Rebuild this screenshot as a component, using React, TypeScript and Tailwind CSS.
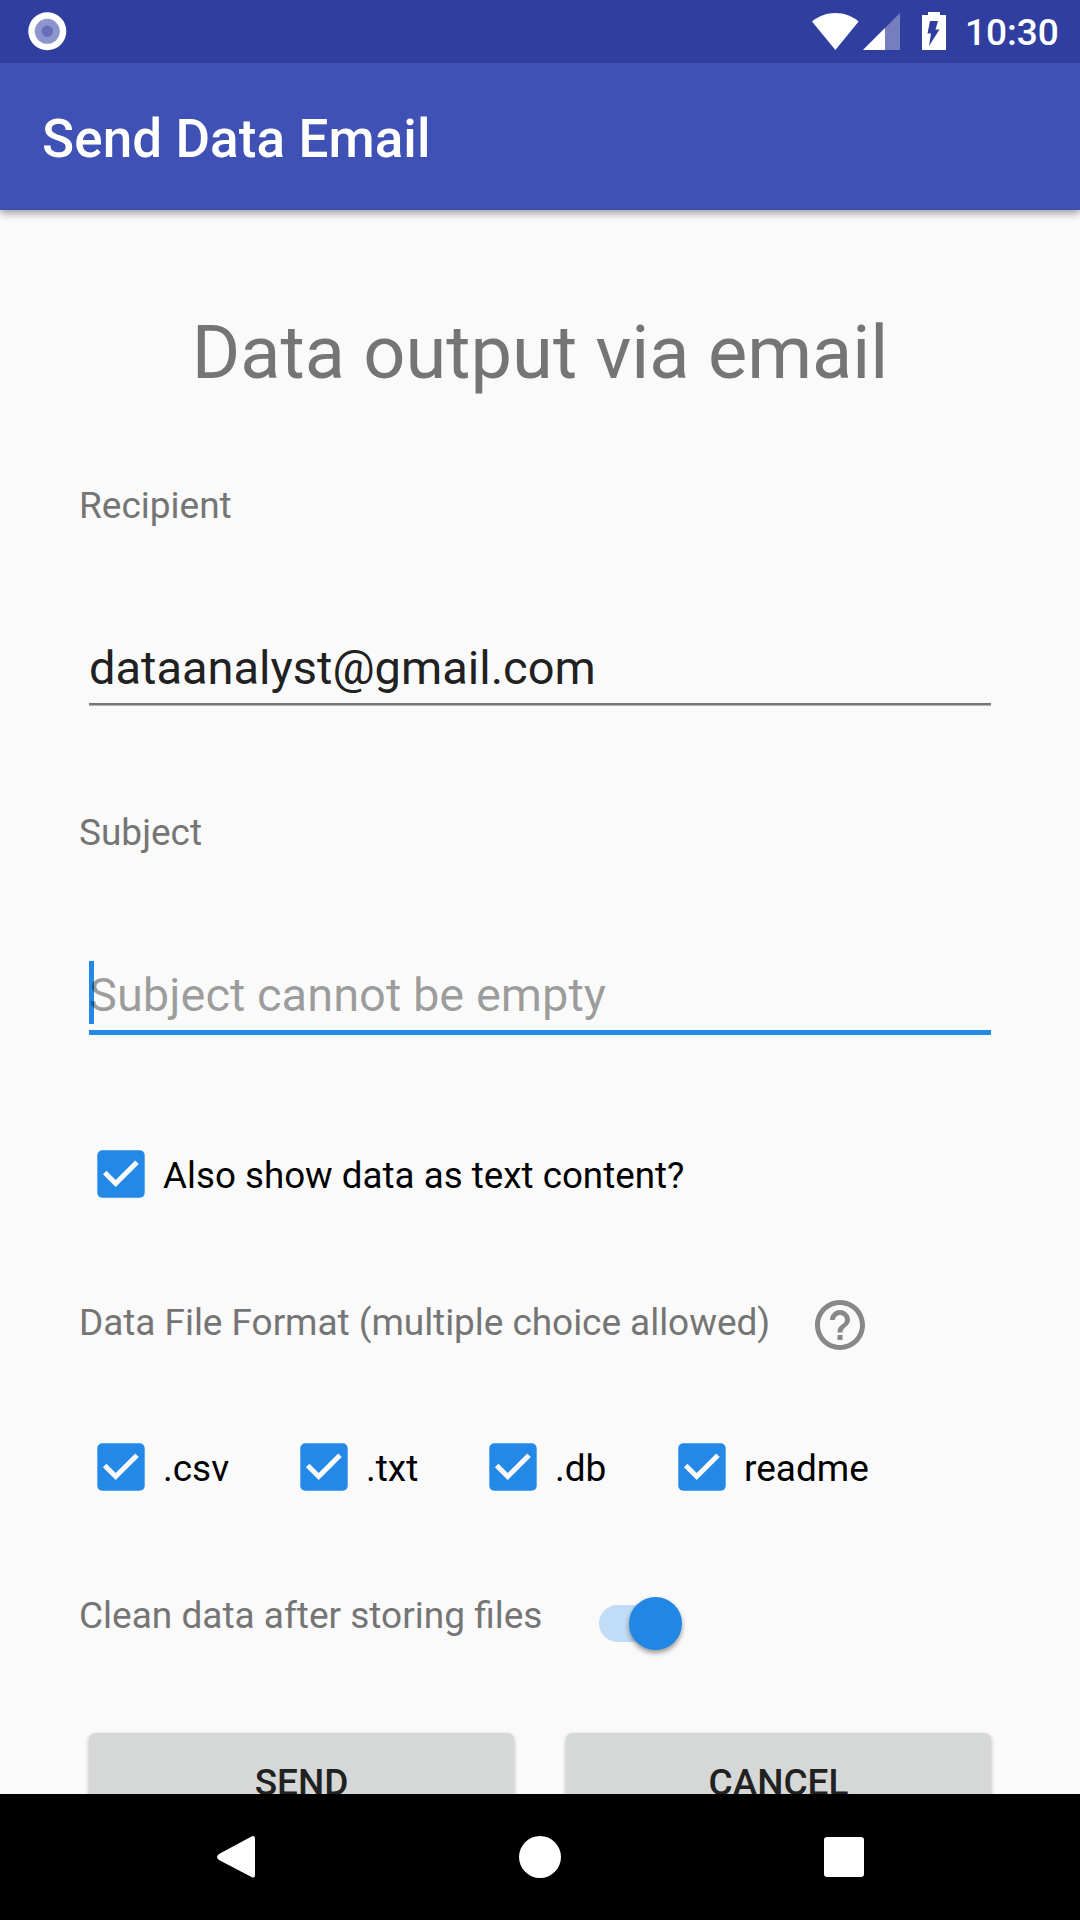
import type { ReactNode } from "react";

function StatusBar() {
  return (
    <div className="relative z-20 flex h-[63px] shrink-0 items-start justify-between bg-[#303f9f] text-white">
      <svg className="mt-[12px] ml-[28px] h-[40px] w-[40px]" viewBox="0 0 40 40">
        <circle cx="19.3" cy="19.3" r="19" fill="#fff" />
        <circle cx="19.3" cy="19.3" r="12.5" fill="#8c95cd" />
        <circle cx="19.3" cy="19.3" r="5.7" fill="#6670b9" />
      </svg>
      <div className="flex items-start pr-[21px]">
        <svg className="mt-[13px] h-[38px] w-[47px]" viewBox="0 0 47 38">
          <path d="M23.4 37 0 8.6C6.5 3 14.5 0 23.4 0s16.900 3 23.200 8.600z" fill="#fff" />
        </svg>
        <svg className="mt-[13px] ml-[4px] h-[38px] w-[38px]" viewBox="0 0 38 38">
          <path d="M0 37 37 0v37z" fill="#767fbe" />
          <path d="M0 37 22 15v22z" fill="#fff" />
        </svg>
        <svg className="mt-[12px] ml-[21px] h-[39px] w-[24px]" viewBox="0 0 24 39">
          <path d="M6 0h12v3h6v35H0V3h6z" fill="#fff" />
          <path d="M8 9h8l-2.500 8.500H17.500L7 34l2-12.500H5.500z" fill="#303f9f" />
        </svg>
        <span className="mt-[11px] ml-[19px] w-[94px] text-[37px] leading-[44px] font-medium">10:30</span>
      </div>
    </div>
  );
}

function CheckBox({ label, className = "" }: { label: string; className?: string }) {
  return (
    <div className={"flex h-[48px] items-center text-black " + className}>
      <svg className="h-[48px] w-[48px]" viewBox="0 0 48 48">
        <rect x="0.300" y="0.300" width="47.400" height="47.400" rx="5" fill="#2388e6" />
        <path d="M7.700 22.500 18.700 33.500 40 12.200" fill="none" stroke="#fafafa" strokeWidth="5" />
      </svg>
      <span className="mt-[3px] ml-[18px] leading-[44px]">{label}</span>
    </div>
  );
}

function Label({ children }: { children: ReactNode }) {
  return <div className="h-[44px] text-[37px] leading-[44px] text-[#757575]">{children}</div>;
}

function Button({ children }: { children: ReactNode }) {
  return (
    <div className="flex h-[98px] w-[425px] shrink-0 items-center justify-center rounded-[6px] bg-[#d6d8d7] pt-[2px] text-[37px] font-medium text-[#212121] shadow-[0_2px_4px_rgba(0,0,0,0.28)]">
      {children}
    </div>
  );
}

export default function App() {
  return (
    <div className="flex h-[1920px] w-[1080px] flex-col overflow-hidden bg-[#fafafa] font-['Roboto',sans-serif] whitespace-nowrap">
      <StatusBar />
      <header className="z-10 flex h-[147px] shrink-0 items-center bg-[#3f51b5] pt-[6px] pl-[42px] text-[53px] font-medium tracking-[0.08px] text-white shadow-[0_3px_8px_rgba(0,0,0,0.4)]">
        Send Data Email
      </header>

      <main className="h-[1584px] shrink-0 overflow-hidden px-[79px] pt-[100px]">
        <h1 className="h-[86px] text-center text-[74px] leading-[86px] text-[#757575]">Data output via email</h1>

        <div className="mt-[88px]">
          <Label>Recipient</Label>
        </div>
        <div className="mx-[10px] mt-[107px] h-[70px] border-b-2 border-[#757575] text-[47px] leading-[65px] text-[#212121] shadow-[0_1px_0_#b4b4b4]">
          dataanalyst@gmail.com
        </div>

        <div className="mt-[106px]">
          <Label>Subject</Label>
        </div>
        <div className="relative mx-[10px] mt-[106px] h-[74px] border-b-[5px] border-[#2388e6] text-[47px] leading-[67px] text-black/38">
          <span className="absolute top-0 left-0 h-[63px] w-[5px] bg-[#2388e6]" />
          <span className="relative">Subject cannot be empty</span>
        </div>

        <CheckBox label="Also show data as text content?" className="mt-[115px] ml-[18px] text-[36.75px]" />

        <div className="mt-[97px] flex h-[60px] items-center">
          <div className="mb-[5px] w-[731px] tracking-[-0.05px]">
            <Label>Data File Format (multiple choice allowed)</Label>
          </div>
          <svg className="h-[60px] w-[60px]" viewBox="0 0 24 24" fill="#888">
            <path d="M11 18h2v-2h-2v2zm1-16C6.480 2 2 6.480 2 12s4.480 10 10 10 10-4.480 10-10S17.520 2 12 2zm0 18c-4.410 0-8-3.590-8-8s3.590-8 8-8 8 3.590 8 8-3.590 8-8 8zm0-14c-2.210 0-4 1.790-4 4h2c0-1.100.9-2 2-2s2 .9 2 2c0 2-3 1.750-3 5h2c0-2.250 3-2.500 3-5 0-2.210-1.790-4-4-4z" />
          </svg>
        </div>

        <div className="mt-[88px] flex pl-[18px] text-[37px]">
          <CheckBox label=".csv" className="w-[203px]" />
          <CheckBox label=".txt" className="w-[189px]" />
          <CheckBox label=".db" className="w-[189px]" />
          <CheckBox label="readme" />
        </div>

        <div className="mt-[103px] flex">
          <div className="w-[520px]">
            <Label>Clean data after storing files</Label>
          </div>
          <div className="mt-[11px] flex h-[37px] w-[73px] items-center justify-end rounded-full bg-[#c1dcf6]">
            <div className="-mr-[10px] h-[53px] w-[53px] shrink-0 rounded-full bg-[#2287e4] shadow-[0_3px_5px_rgba(0,0,0,0.4)]" />
          </div>
        </div>

        <div className="mt-[91px] flex justify-between px-[10px]">
          <Button>SEND</Button>
          <Button>CANCEL</Button>
        </div>
      </main>

      <nav className="z-10 flex h-[126px] shrink-0 items-center bg-black pl-[216px]">
        <svg className="h-[44px] w-[40px]" viewBox="0 0 40 44">
          <path d="M36 1.200Q39 .5 39 4v36q0 3.500-3 2.300L3 25q-4-3 0-6z" fill="#fff" />
        </svg>
        <div className="ml-[263px] h-[42px] w-[42px] rounded-full bg-white" />
        <div className="ml-[263px] h-[40px] w-[40px] rounded-[3px] bg-white" />
      </nav>
    </div>
  );
}
